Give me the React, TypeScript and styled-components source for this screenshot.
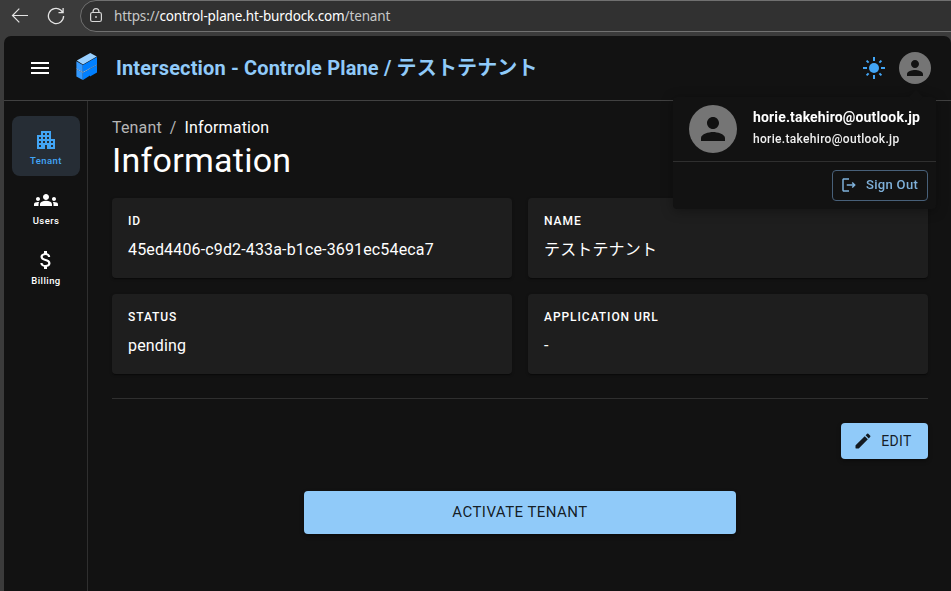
import React from "react";
import styled, { createGlobalStyle } from "styled-components";

const GlobalStyle = createGlobalStyle`
  * { box-sizing: border-box; }
  html, body { margin: 0; padding: 0; background: #3b3b3b; }
  body {
    font-family: Roboto, "Noto Sans CJK JP", sans-serif;
    color: #fff;
    overflow: hidden;
  }
`;

const Browser = styled.div`
  width: 951px;
  height: 591px;
  display: flex;
  flex-direction: column;
  background: #3b3b3b;
  overflow: hidden;
`;

const BrowserBar = styled.div`
  height: 36px;
  flex: none;
  display: flex;
  align-items: flex-start;
`;

const BrowserButtons = styled.div`
  width: 80px;
  height: 32px;
  flex: none;
  display: flex;
  align-items: center;
  padding-left: 11px;
  gap: 18px;
`;

const AddressBar = styled.div`
  flex: 1;
  height: 32px;
  margin-right: -20px;
  border: 1px solid #707070;
  border-radius: 16px;
  background: #313131;
  display: flex;
  align-items: center;
  padding-left: 8px;
`;

const Url = styled.span`
  margin-left: 10px;
  font: 400 13.5px/18px "Noto Sans", sans-serif;
  letter-spacing: -0.13px;
  color: #fff;
  white-space: nowrap;
`;

const UrlMuted = styled.span`
  color: #c8c8c8;
`;

const Page = styled.div`
  margin-left: 4px;
  flex: 1;
  display: flex;
  flex-direction: column;
  background: #121212;
  border-radius: 7px 7px 0 0;
`;

const Header = styled.header`
  position: relative;
  height: 65px;
  flex: none;
  display: flex;
  align-items: center;
  border-bottom: 1px solid #414141;
  padding: 0 20px 0 24px;
`;

const Brand = styled.div`
  display: flex;
  align-items: center;
  flex: 1;
  margin-left: 23px;
`;

const BrandTitle = styled.div`
  margin-left: 17px;
  font-size: 20px;
  font-weight: 700;
  line-height: 32px;
  letter-spacing: 0.15px;
  color: #90caf9;
  white-space: nowrap;
`;

const HeaderActions = styled.div`
  display: flex;
  align-items: center;
  gap: 13px;
`;

const Avatar = styled.div<{ $size: number }>`
  width: ${(p) => p.$size}px;
  height: ${(p) => p.$size}px;
  flex: none;
  border-radius: 50%;
  background: #757575;
  color: #121212;
  display: flex;
  align-items: center;
  justify-content: center;
`;

const AccountMenu = styled.div`
  position: absolute;
  z-index: 2;
  top: 61px;
  right: 15px;
  width: 263px;
  height: 112px;
  border-radius: 4px;
  background: #121212;
  filter: drop-shadow(0 2px 6px rgba(0, 0, 0, 0.34));

  &::before {
    content: "";
    position: absolute;
    top: -5px;
    right: 15px;
    width: 10px;
    height: 10px;
    background: #121212;
    transform: rotate(45deg);
  }
`;

const Account = styled.div`
  height: 65px;
  display: flex;
  align-items: center;
  padding-left: 16px;
  border-bottom: 1px solid #2f2f2f;
`;

const AccountText = styled.div`
  margin-left: 16px;
  padding-bottom: 4px;
  white-space: nowrap;
`;

const AccountName = styled.div`
  font-size: 14px;
  font-weight: 700;
  line-height: 24px;
  letter-spacing: 0.15px;
`;

const AccountEmail = styled.div`
  font-size: 12px;
  font-weight: 500;
  line-height: 20px;
  letter-spacing: 0.32px;
  color: #f0f0f0;
`;

const AccountFooter = styled.div`
  display: flex;
  justify-content: flex-end;
  padding: 8px 8px 0;
`;

const SignOut = styled.button`
  width: 96px;
  height: 31px;
  padding: 0 0 1px 7px;
  display: flex;
  align-items: center;
  gap: 8px;
  border: 1px solid #486079;
  border-radius: 4px;
  background: transparent;
  color: #7fb1da;
  font: 500 13px/22px Roboto, sans-serif;
  letter-spacing: 0.32px;
  white-space: nowrap;
`;

const Body = styled.div`
  flex: 1;
  display: flex;
`;

const Sidebar = styled.nav`
  width: 84px;
  flex: none;
  padding: 15px 8px 0;
  border-right: 1px solid #2f2f2f;
`;

const NavItem = styled.a<{ $active?: boolean }>`
  width: 68px;
  height: 60px;
  display: flex;
  flex-direction: column;
  align-items: center;
  padding-top: 12px;
  border-radius: 8px;
  background: ${(p) => (p.$active ? "#262d35" : "transparent")};
  color: ${(p) => (p.$active ? "#42a5f5" : "#fff")};
  font-size: 9.5px;
  font-weight: 500;
  line-height: 18px;
  letter-spacing: 0.42px;
`;

const Main = styled.main`
  flex: 1;
  padding: 16px 23px 0 24px;
  display: flex;
  flex-direction: column;
`;

const Crumbs = styled.div`
  display: flex;
  gap: 8px;
  font-size: 16px;
  line-height: 24px;
  letter-spacing: 0.15px;
  height: 24px;
  margin-top: -1px;
  color: #b6b6b6;
`;

const CrumbCurrent = styled.span`
  color: #fff;
`;

const Title = styled.h1`
  margin: 0;
  font-size: 34px;
  font-weight: 400;
  line-height: 40px;
  letter-spacing: 0.25px;
`;

const Cards = styled.div`
  display: grid;
  grid-template-columns: 1fr 1fr;
  gap: 16px;
  margin-top: 18px;
`;

const Card = styled.section`
  height: 80px;
  padding: 11px 16px;
  border-radius: 4px;
  background: #1e1e1e;
  box-shadow: 0 1px 3px rgba(0, 0, 0, 0.3), 0 2px 1px -1px rgba(0, 0, 0, 0.3);
`;

const CardLabel = styled.div`
  font-size: 12px;
  font-weight: 500;
  line-height: 24px;
  letter-spacing: 0.94px;
  text-transform: uppercase;
`;

const CardValue = styled.div`
  margin-top: 5px;
  font-size: 16px;
  line-height: 24px;
  letter-spacing: 0.15px;
`;

const Divider = styled.hr`
  width: 100%;
  height: 1px;
  margin: 24px 0;
  border: 0;
  background: #2f2f2f;
`;

const Button = styled.button<{ $wide?: boolean }>`
  height: ${(p) => (p.$wide ? 43 : 36)}px;
  width: ${(p) => (p.$wide ? 432 : 87)}px;
  align-self: ${(p) => (p.$wide ? "center" : "flex-end")};
  margin: ${(p) => (p.$wide ? "32px 0 0" : "0")};
  padding: ${(p) => (p.$wide ? "0 0 2px" : "0 4px 1px 0")};
  display: flex;
  align-items: center;
  justify-content: center;
  gap: 8px;
  border: 0;
  border-radius: 4px;
  background: #90caf9;
  color: rgba(0, 0, 0, 0.87);
  font-family: Roboto, sans-serif;
  font-weight: 400;
  font-size: ${(p) => (p.$wide ? 15 : 14)}px;
  line-height: 24px;
  letter-spacing: ${(p) => (p.$wide ? 0.46 : 0.4)}px;
  text-transform: uppercase;
  box-shadow: 0 2px 4px rgba(0, 0, 0, 0.4);
`;

const Svg = styled.svg`
  display: block;
  flex: none;
  fill: currentColor;
`;

const ICONS = {
  menu: "M3 18h18v-2H3zm0-5h18v-2H3zm0-7v2h18V6z",
  person:
    "M12 12c2.21 0 4-1.79 4-4s-1.79-4-4-4-4 1.79-4 4 1.79 4 4 4m0 2c-2.67 0-8 1.34-8 4v2h16v-2c0-2.66-5.33-4-8-4",
  tenant:
    "M17 11V3H7v4H3v14h8v-4h2v4h8V11zM7 19H5v-2h2zm0-4H5v-2h2zm0-4H5V9h2zm4 4H9v-2h2zm0-4H9V9h2zm0-4H9V5h2zm4 8h-2v-2h2zm0-4h-2V9h2zm0-4h-2V5h2zm4 12h-2v-2h2zm0-4h-2v-2h2z",
  users:
    "M12 12.75c1.63 0 3.07.39 4.24.9 1.08.48 1.76 1.56 1.76 2.73V18H6v-1.61c0-1.18.68-2.26 1.76-2.73 1.17-.52 2.61-.91 4.24-.91M4 13c1.1 0 2-.9 2-2s-.9-2-2-2-2 .9-2 2 .9 2 2 2m1.13 1.1c-.37-.06-.74-.1-1.13-.1-.99 0-1.93.21-2.78.58C.48 14.9 0 15.62 0 16.43V18h4.5v-1.61c0-.83.23-1.61.63-2.29M20 13c1.1 0 2-.9 2-2s-.9-2-2-2-2 .9-2 2 .9 2 2 2m4 3.43c0-.81-.48-1.53-1.22-1.85-.85-.37-1.79-.58-2.78-.58-.39 0-.76.04-1.13.1.4.68.63 1.46.63 2.29V18H24zM12 6c1.66 0 3 1.34 3 3s-1.34 3-3 3-3-1.34-3-3 1.34-3 3-3",
  billing:
    "M11.8 10.9c-2.27-.59-3-1.2-3-2.15 0-1.09 1.01-1.85 2.7-1.85 1.78 0 2.44.85 2.5 2.1h2.21c-.07-1.72-1.12-3.3-3.21-3.81V3h-3v2.16c-1.94.42-3.5 1.68-3.5 3.61 0 2.31 1.91 3.46 4.7 4.13 2.5.6 3 1.48 3 2.41 0 .69-.49 1.79-2.7 1.79-2.06 0-2.87-.92-2.98-2.1h-2.2c.12 2.19 1.76 3.42 3.68 3.83V21h3v-2.15c1.95-.37 3.5-1.5 3.5-3.55 0-2.84-2.43-3.81-4.7-4.4",
  edit:
    "M3 17.46v3.04c0 .28.22.5.5.5h3.04c.13 0 .26-.05.35-.15L17.81 9.94l-3.75-3.75L3.15 17.1q-.15.15-.15.36M20.71 7.04c.39-.39.39-1.02 0-1.41l-2.34-2.34a.9959.9959 0 0 0-1.41 0l-1.83 1.83 3.75 3.75z",
  logout:
    "m17 8-1.41 1.41L17.17 11H9v2h8.17l-1.58 1.58L17 16l4-4zM5 5h7V3H5c-1.1 0-2 .9-2 2v14c0 1.1.9 2 2 2h7v-2H5z",
};

function Icon({ name, size = 24 }: { name: keyof typeof ICONS; size?: number }) {
  return (
    <Svg width={size} height={size} viewBox="0 0 24 24">
      <path d={ICONS[name]} />
    </Svg>
  );
}

function BackIcon() {
  return (
    <svg width="18" height="16" viewBox="0 0 18 16" fill="none" stroke="#e4e4e4" strokeWidth="1.2">
      <path d="M17 7.5H1.5M8.3.7 1.5 7.5l6.8 6.8" />
    </svg>
  );
}

function ReloadIcon() {
  return (
    <svg width="18" height="18" viewBox="0 0 18 18" fill="none" stroke="#e4e4e4" strokeWidth="1.3">
      <path d="M16.6 9A7.6 7.6 0 1 1 13.7 3l2 2.2M16.1 1v4.6h-4.6" />
    </svg>
  );
}

function LockIcon() {
  return (
    <svg width="15" height="16" viewBox="0 0 15 16" fill="none" stroke="#d8d8d8" strokeWidth="1.2">
      <rect x="1.6" y="4.5" width="10.8" height="9" rx="1.8" />
      <path d="M4.1 4.5V3.6a2.9 2.9 0 0 1 5.8 0v.9" />
      <circle cx="7" cy="9" r="0.9" fill="#d8d8d8" stroke="none" />
    </svg>
  );
}

function Logo() {
  return (
    <svg width="24" height="30" viewBox="0 0 24 30">
      <path d="M1.8 7.6 15.3 0 21.8 3.6 8 11.6Z" fill="#99d0ff" />
      <path d="M1.4 8.2 7.8 12v7L1.4 15.4Z" fill="#3399ff" />
      <path d="M1.4 16.2 7.8 19.8v7.2L1.4 23.4Z" fill="#3399ff" />
      <path d="M8 12 22 4v7.4L8 19Z" fill="#007fff" />
      <path d="M8 19.8 22 12.2v7.4L15 23.4v-.8L8 27Z" fill="#007fff" />
      <path d="M1.4 15.8 7.9 19.4 15 15.5" fill="none" stroke="#99ccff" strokeWidth=".8" />
      <path d="M15 15.5 22 11.8" fill="none" stroke="#66b2ff" strokeWidth=".8" />
    </svg>
  );
}

function SunIcon() {
  return (
    <svg width="24" height="24" viewBox="0 0 24 24" fill="none" stroke="#42a5f5" strokeWidth="2">
      <circle cx="12" cy="12" r="5" fill="#42a5f5" stroke="none" />
      <path d="M12 1v4M12 19v4M1 12h4M19 12h4M4.6 4.6l2 2M17.4 17.4l2 2M4.6 19.4l2-2M17.4 6.6l2-2" />
    </svg>
  );
}

const NAV: { icon: keyof typeof ICONS; label: string; active?: boolean }[] = [
  { icon: "tenant", label: "Tenant", active: true },
  { icon: "users", label: "Users" },
  { icon: "billing", label: "Billing" },
];

const FIELDS = [
  { label: "ID", value: "45ed4406-c9d2-433a-b1ce-3691ec54eca7" },
  { label: "Name", value: "テストテナント" },
  { label: "Status", value: "pending" },
  { label: "Application URL", value: "-" },
];

export default function App() {
  return (
    <Browser>
      <GlobalStyle />
      <BrowserBar>
        <BrowserButtons>
          <BackIcon />
          <ReloadIcon />
        </BrowserButtons>
        <AddressBar>
          <LockIcon />
          <Url>
            <UrlMuted>https://</UrlMuted>control-plane.ht-burdock.com<UrlMuted>/tenant</UrlMuted>
          </Url>
        </AddressBar>
      </BrowserBar>
      <Page>
        <Header>
          <Icon name="menu" />
          <Brand>
            <Logo />
            <BrandTitle>Intersection - Controle Plane / テストテナント</BrandTitle>
          </Brand>
          <HeaderActions>
            <SunIcon />
            <Avatar $size={32}>
              <Icon name="person" size={24} />
            </Avatar>
          </HeaderActions>
          <AccountMenu>
            <Account>
              <Avatar $size={48}>
                <Icon name="person" size={36} />
              </Avatar>
              <AccountText>
                <AccountName>horie.takehiro@outlook.jp</AccountName>
                <AccountEmail>horie.takehiro@outlook.jp</AccountEmail>
              </AccountText>
            </Account>
            <AccountFooter>
              <SignOut>
                <Icon name="logout" size={18} />
                Sign Out
              </SignOut>
            </AccountFooter>
          </AccountMenu>
        </Header>
        <Body>
          <Sidebar>
            {NAV.map((item) => (
              <NavItem key={item.label} $active={item.active}>
                <Icon name={item.icon} />
                {item.label}
              </NavItem>
            ))}
          </Sidebar>
          <Main>
            <Crumbs>
              <span>Tenant</span>
              <span>/</span>
              <CrumbCurrent>Information</CrumbCurrent>
            </Crumbs>
            <Title>Information</Title>
            <Cards>
              {FIELDS.map((field) => (
                <Card key={field.label}>
                  <CardLabel>{field.label}</CardLabel>
                  <CardValue>{field.value}</CardValue>
                </Card>
              ))}
            </Cards>
            <Divider />
            <Button>
              <Icon name="edit" size={20} />
              Edit
            </Button>
            <Button $wide>Activate Tenant</Button>
          </Main>
        </Body>
      </Page>
    </Browser>
  );
}
